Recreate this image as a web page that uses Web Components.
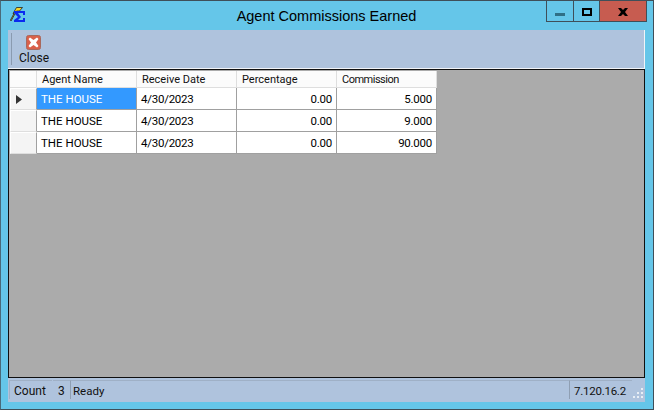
<!DOCTYPE html>
<html>
<head>
<meta charset="utf-8">
<title>Agent Commissions Earned</title>
<style>
  html, body { margin: 0; padding: 0; background: #65c6e9; }
  body { font: 12px Roboto, "Liberation Sans", sans-serif; color: #000; }
</style>
</head>
<body>
<app-window>
  <title-bar slot="title" caption="Agent Commissions Earned"></title-bar>
  <tool-bar slot="toolbar"></tool-bar>
  <commission-grid slot="content"></commission-grid>
  <status-bar slot="status"></status-bar>
</app-window>

<script>
class AppWindow extends HTMLElement {
  constructor() {
    super();
    const shadow = this.attachShadow({ mode: "open" });
    shadow.innerHTML = `
      <style>
        :host {
          display: flex;
          flex-direction: column;
          box-sizing: border-box;
          width: 654px;
          height: 410px;
          background: #65c6e9;
          border: 1px solid #3f4f59;
          border-left-color: #4a6a7a;
          position: relative;
        }
        .client {
          display: flex;
          flex-direction: column;
          flex: 1;
          margin: 0 8px 7px 7px;
          background: #afc3dd;
          min-height: 0;
        }
      </style>
      <slot name="title"></slot>
      <div class="client">
        <slot name="toolbar"></slot>
        <slot name="content"></slot>
        <slot name="status"></slot>
      </div>
    `;
  }
}

class TitleBar extends HTMLElement {
  constructor() {
    super();
    const shadow = this.attachShadow({ mode: "open" });
    shadow.innerHTML = `
      <style>
        :host {
          display: grid;
          grid-template-columns: 1fr auto 1fr;
          flex: none;
          height: 29px;
        }
        .icon { display: block; width: 16px; height: 16px; margin: 6px 0 0 9px; }
        .caption {
          font: 14.5px/30px "Liberation Sans", Arial, sans-serif;
          color: #000;
          margin-left: -1px;
        }
        .buttons {
          justify-self: end;
          display: flex;
          height: 21px;
          margin-right: 6px;
          box-sizing: border-box;
          border: 1px solid #3f4f59;
          border-top: 0;
        }
        .btn { display: flex; justify-content: center; box-sizing: border-box; }
        .min { width: 27px; border-right: 1px solid #3f4f59; padding-top: 12px; }
        .max { width: 26px; border-right: 1px solid #3f4f59; padding-top: 7px; }
        .close { width: 46px; background: #c75c50; padding-top: 7px; }
        .btn svg { display: block; }
      </style>
      <div><svg class="icon" viewBox="0 0 16 16">
        <path d="M6.500.5h6L9.500 4H6.500L1 14 .5 13 4 6.500H3z" fill="#f5d32a" stroke="#222" stroke-width=".8"/>
        <path d="M4 4h11v4h-2V6H8l3 4-3 3h5v-2h2v4H4v-2l4-3-4-4z" fill="#0a2af0"/>
      </svg></div>
      <div class="caption">${this.getAttribute("caption")}</div>
      <div class="buttons">
        <div class="btn min"><svg width="10" height="3"><rect width="10" height="3" fill="#2f6f86"/></svg></div>
        <div class="btn max"><svg width="10" height="8"><rect x="1" y="1" width="8" height="6" fill="none" stroke="#000" stroke-width="2"/></svg></div>
        <div class="btn close"><svg width="10" height="8" viewBox="0 0 10 8"><path d="M0 0h3l2 2 2-2h3L7 4l3 4H7L5 6 3 8H0l3-4z" fill="#000"/></svg></div>
      </div>
    `;
  }
}

class ToolBar extends HTMLElement {
  constructor() {
    super();
    const shadow = this.attachShadow({ mode: "open" });
    shadow.innerHTML = `
      <style>
        :host {
          display: flex;
          flex: none;
          box-sizing: border-box;
          height: 39px;
          padding: 3px 0 3px 3px;
          background: #afc3dd;
          border-right: 1px solid #f1f4f8;
          border-bottom: 1px solid #f1f4f8;
        }
        .grip { width: 1px; background: #8a9bb0; margin-right: 7px; }
        .tool { display: flex; flex-direction: column; align-items: center; width: 30px; }
        .tool svg { margin: 2px 2px 0 0; }
        .tool span { font: 12px/14px Roboto, sans-serif; margin-top: 1px; color: #111; }
      </style>
      <div class="grip"></div>
      <div class="tool">
        <svg width="15" height="15" viewBox="0 0 15 15">
          <rect x=".5" y=".5" width="14" height="14" rx="2" fill="#d9604a" stroke="#a8685c"/>
          <path d="M2.500 4l1.500-1.500 3.500 2.500L11 2.500 12.500 4 10 7.500l2.500 3.500-1.500 1.500-3.500-2.500L4 12.500 2.500 11 5 7.500z" fill="#fff"/>
        </svg>
        <span>Close</span>
      </div>
    `;
  }
}

class CommissionGrid extends HTMLElement {
  constructor() {
    super();
    const shadow = this.attachShadow({ mode: "open" });
    const rows = [
      ["THE HOUSE", "4/30/2023", "0.00", "5.000"],
      ["THE HOUSE", "4/30/2023", "0.00", "9.000"],
      ["THE HOUSE", "4/30/2023", "0.00", "90.000"],
    ];
    const body = rows.map((r, i) => `
      <div class="rowhead">${i == 0 ? '<svg width="6" height="9"><path d="M0 0l6 4.500L0 9z" fill="#333"/></svg>' : ""}</div>
      <div class="cell name ${i == 0 ? "sel" : ""}">${r[0]}</div>
      <div class="cell">${r[1]}</div>
      <div class="cell num">${r[2]}</div>
      <div class="cell num">${r[3]}</div>
    `).join("");
    shadow.innerHTML = `
      <style>
        :host {
          display: block;
          flex: 1;
          min-height: 0;
          box-sizing: border-box;
          background: #ababab;
          border: 1px solid #101010;
          padding: 1px;
        }
        .table {
          display: grid;
          grid-template-columns: 27px 100px 100px 100px 100px;
          grid-template-rows: 17px 22px 22px 22px;
          width: max-content;
          font: 11.500px Roboto, sans-serif;
        }
        .head {
          background: #fbfbfb;
          border-right: 1px solid #dedede;
          border-bottom: 1px solid #dedede;
          padding-left: 5px;
          line-height: 17px;
          font-size: 11px;
          color: #111;
          box-sizing: border-box;
          overflow: hidden;
        }
        .head.tight { letter-spacing: -.5px; }
        .rowhead {
          background: #f4f4f4;
          border: 1px solid #fff;
          border-right: 1px solid #a0a0a0;
          border-bottom: 1px solid #dedede;
          display: flex;
          align-items: center;
          padding-left: 5px;
          box-sizing: border-box;
        }
        .cell {
          background: #fff;
          border-right: 1px solid #a0a0a0;
          border-bottom: 1px solid #a0a0a0;
          padding: 0 4px;
          line-height: 23px;
          letter-spacing: -.25px;
          box-sizing: border-box;
          color: #000;
        }
        .cell.name { letter-spacing: 0; }
        .cell.sel { background: #3399ff; color: #fff; }
        .cell.num { text-align: right; }
      </style>
      <div class="table">
        <div class="head"></div>
        <div class="head">Agent Name</div>
        <div class="head">Receive Date</div>
        <div class="head">Percentage</div>
        <div class="head tight">Commission</div>
        ${body}
      </div>
    `;
  }
}

class StatusBar extends HTMLElement {
  constructor() {
    super();
    const shadow = this.attachShadow({ mode: "open" });
    shadow.innerHTML = `
      <style>
        :host {
          display: flex;
          flex: none;
          box-sizing: border-box;
          height: 24px;
          padding: 2px 0 2px 1px;
          background: #afc3dd;
          font: 12px/20px Roboto, sans-serif;
          color: #111;
        }
        .panel { box-sizing: border-box; border-top: 1px solid #9fb0c6; height: 19px; line-height: 21px; padding-left: 5px; }
        .count { width: 43px; margin-right: 1px; border-left: 1px solid #9fb0c6; padding-left: 4px; }
        .three { width: 17px; padding-left: 5px; }
        .ready { flex: 1; border-left: 1px solid #8f9fb3; padding-left: 2px; font-size: 11.500px; }
        .ver { width: 63px; border-left: 1px solid #8f9fb3; margin-right: 13px; padding-left: 4px; font-size: 11.500px; letter-spacing: -.25px; }
        .gripper { position: absolute; right: 9px; bottom: 9px; }
      </style>
      <div class="panel count">Count</div>
      <div class="panel three">3</div>
      <div class="panel ready">Ready</div>
      <div class="panel ver">7.120.16.2</div>
      <svg class="gripper" width="12" height="12"><path d="M9 0h2v2H9zM5 4h2v2H5zM9 4h2v2H9zM1 8h2v2H1zM5 8h2v2H5zM9 8h2v2H9z" fill="#e8eef5"/></svg>
    `;
  }
}

customElements.define("app-window", AppWindow);
customElements.define("title-bar", TitleBar);
customElements.define("tool-bar", ToolBar);
customElements.define("commission-grid", CommissionGrid);
customElements.define("status-bar", StatusBar);
</script>
</body>
</html>
